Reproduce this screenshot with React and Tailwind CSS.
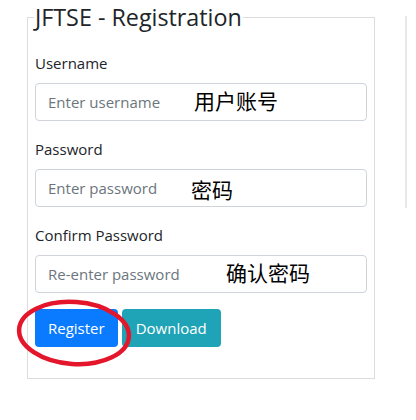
export default function App() {
    const font = { fontFamily: '"Open Sans", "Noto Sans CJK SC", sans-serif' };
    const inputCls =
        "block w-full h-[38px] px-[12px] border border-[#ced4da] rounded-[4px] text-[15px] placeholder:text-[#6c757d]";
    return (
        <div className="relative w-[416px] h-[420px] bg-white text-[#212529]" style={font}>
            <div className="flex items-start pt-[3px]">
                <fieldset className="ml-[27px] w-[348px] border border-[#dcdcdc] px-[7px] pb-[31px]">
                    <legend className="-ml-[1px] px-[1px] text-[23.3px] leading-[29px]">JFTSE - Registration</legend>
                    <div className="pt-[19px]">
                        <div className="mb-[16px]">
                            <label className="block mb-[8px] text-[15px] leading-[24px]">Username</label>
                            <input type="text" placeholder="Enter username" className={inputCls} />
                        </div>
                        <div className="mb-[16px]">
                            <label className="block mb-[8px] text-[15px] leading-[24px]">Password</label>
                            <input type="password" placeholder="Enter password" className={inputCls} />
                        </div>
                        <div className="mb-[16px]">
                            <label className="block mb-[8px] text-[15px] leading-[24px]">Confirm Password</label>
                            <input type="password" placeholder="Re-enter password" className={inputCls} />
                        </div>
                        <div className="flex gap-[4px]">
                            <button className="h-[38px] px-[13px] rounded-[4px] bg-[#0a7bff] text-white text-[15px]">Register</button>
                            <button className="h-[38px] px-[14px] rounded-[4px] bg-[#1fa3b6] text-white text-[15px]">Download</button>
                        </div>
                    </div>
                </fieldset>
                <div className="ml-[30px] mt-[13px] h-[192px] border-l-2 border-[#e8e8e8]" />
            </div>

            {/* annotations */}
            <span className="absolute left-[194px] top-[91px] text-[21px] leading-none text-black">用户账号</span>
            <span className="absolute left-[191px] top-[180px] text-[21px] leading-none text-black">密码</span>
            <span className="absolute left-[226px] top-[263px] text-[21px] leading-none text-black">确认密码</span>
            <svg className="absolute left-0 top-0 pointer-events-none" width="416" height="420">
                <ellipse cx="74" cy="333" rx="55" ry="31" fill="none" stroke="#e3162b" strokeWidth="4.5" transform="rotate(4 74 333)" />
            </svg>
        </div>
    );
}
